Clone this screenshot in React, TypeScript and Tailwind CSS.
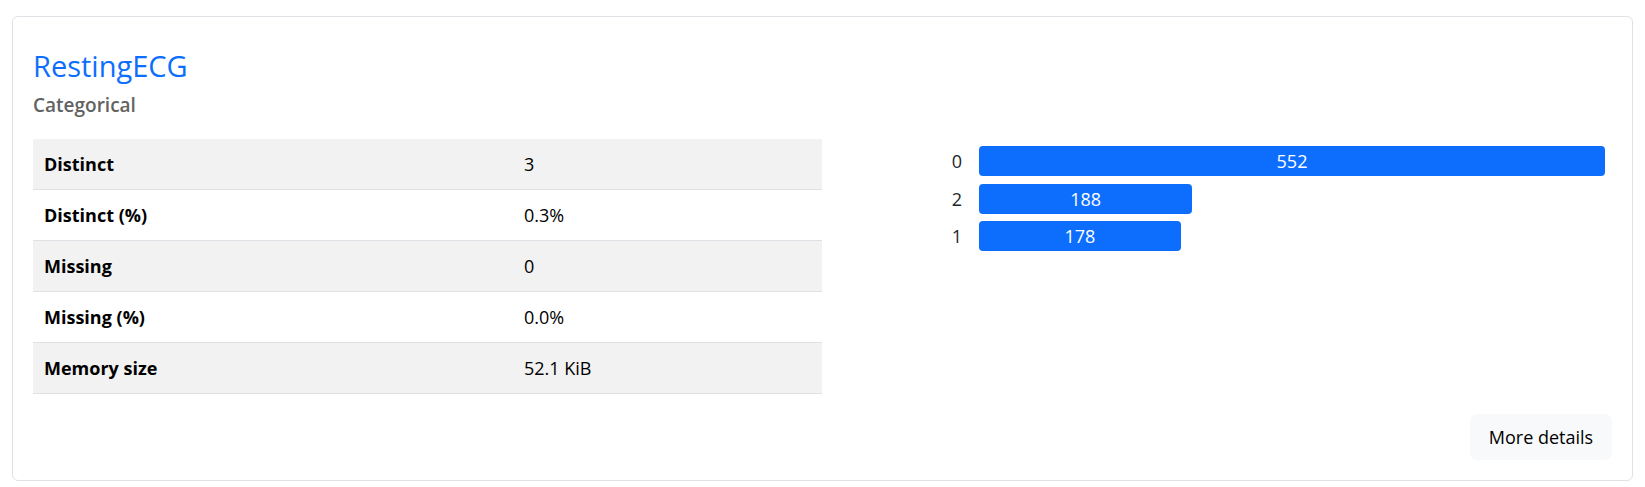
const stats = [
  { label: "Distinct", value: "3" },
  { label: "Distinct (%)", value: "0.3%" },
  { label: "Missing", value: "0" },
  { label: "Missing (%)", value: "0.0%" },
  { label: "Memory size", value: "52.1 KiB" },
];

const counts = [
  { key: "0", n: 552 },
  { key: "2", n: 188 },
  { key: "1", n: 178 },
];

export default function App() {
  const max = Math.max(...counts.map((c) => c.n));

  return (
    <div className="bg-white px-3 pt-4 pb-[6px] font-['Open_Sans',sans-serif] text-[#212529]">
      <div className="border border-[#dee2e6] rounded-[6px] p-5">
        <div className="pt-[11px]">
          <h2 className="text-[29px] leading-[36px] font-medium text-[#0d6efd]">RestingECG</h2>
          <p className="mt-[7px] text-[19px] leading-[28px] font-semibold text-[#626262]">
            Categorical
          </p>
        </div>

        <div className="grid grid-cols-[789px_1fr] gap-[30px] mt-5">
          <table className="w-full border-collapse text-[18px] leading-[30px]">
            <tbody>
              {stats.map((s, i) => (
                <tr
                  key={s.label}
                  className={`border-b border-[#dee2e6] ${i % 2 === 0 ? "bg-[#f2f2f2]" : "bg-white"}`}
                >
                  <th className="w-[480px] py-[10px] px-[11px] text-left font-bold text-black">
                    {s.label}
                  </th>
                  <td className="py-[10px] px-[11px] text-black">{s.value}</td>
                </tr>
              ))}
            </tbody>
          </table>

          <div className="pt-[7px] flex flex-col gap-[7.5px]">
            {counts.map((c) => (
              <div key={c.key} className="flex items-center">
                <div className="w-[127px] pr-[17px] text-right text-[18px] leading-[30px]">
                  {c.key}
                </div>
                <div className="flex-1 pr-[7px]">
                  <div
                    className="h-[30px] rounded-[4px] bg-[#0d6efd] text-white text-center text-[18px] leading-[30px]"
                    style={{ width: `${(c.n / max) * 100}%` }}
                  >
                    {c.n}
                  </div>
                </div>
              </div>
            ))}
          </div>
        </div>

        <div className="flex justify-end mt-5">
          <button className="w-[142px] h-[46px] rounded-[7px] bg-[#f8f9fa] text-[18px] text-black">
            More details
          </button>
        </div>
      </div>
    </div>
  );
}
